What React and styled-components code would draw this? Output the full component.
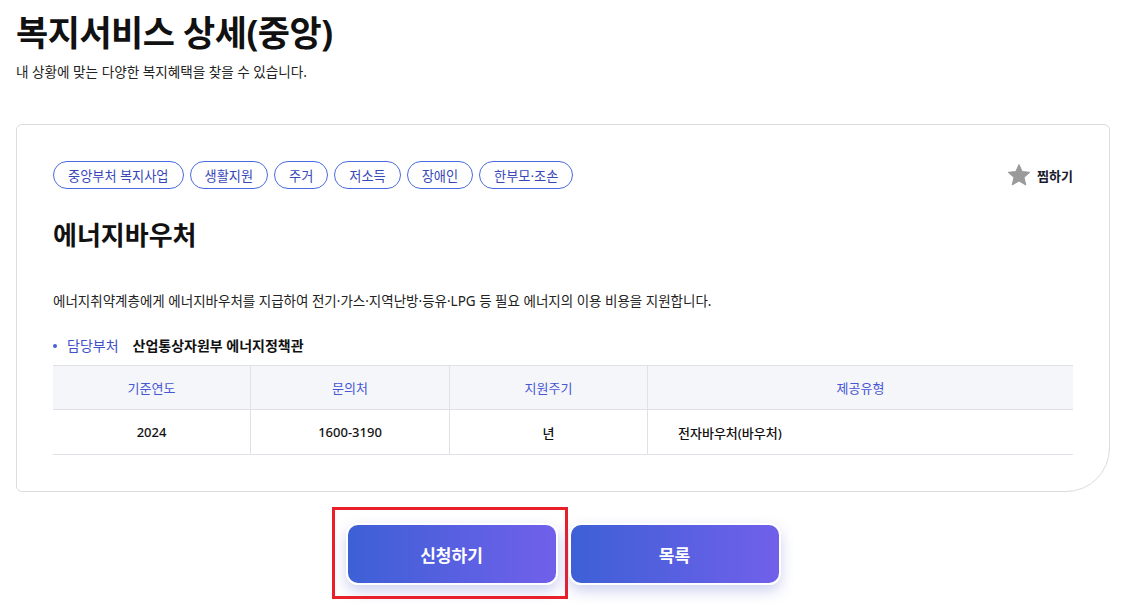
import styled, { createGlobalStyle } from "styled-components";

const GlobalStyle = createGlobalStyle`
  body {
    margin: 0;
    background: #ffffff;
    font-family: "Noto Sans", "Noto Sans CJK KR", sans-serif;
    color: #111111;
  }
`;

const Page = styled.div`
  width: 1094px;
  padding: 0 14px 24px 16px;
`;

const PageTitle = styled.h1`
  margin: 8px 0 0 0;
  font-size: 35px;
  font-weight: 700;
  line-height: 50px;
  letter-spacing: -0.5px;
`;

const PageDesc = styled.p`
  margin: 4px 0 0 0;
  font-size: 13.6px;
  line-height: 20px;
  color: #222;
`;

const Card = styled.div`
  margin-top: 42px;
  border: 1px solid #dcdcdc;
  border-radius: 6px 6px 44px 6px;
  padding: 36px;
`;

const TopRow = styled.div`
  display: flex;
  justify-content: space-between;
  align-items: center;
`;

const Tags = styled.div`
  display: flex;
  gap: 6px;
`;

const Tag = styled.span`
  display: inline-flex;
  align-items: center;
  height: 26px;
  padding: 0 14px;
  border: 1px solid #4a6bdf;
  border-radius: 14px;
  font-size: 13.2px;
  color: #3848b8;
`;

const LikeButton = styled.button`
  display: flex;
  align-items: center;
  gap: 6px;
  border: none;
  background: none;
  padding: 0;
  font-family: inherit;
  font-size: 13px;
  font-weight: 700;
  color: #1a1a2e;
  cursor: pointer;
`;

const ServiceTitle = styled.h2`
  margin: 26px 0 0 0;
  font-size: 26px;
  font-weight: 700;
  line-height: 40px;
`;

const ServiceDesc = styled.p`
  margin: 34px 0 0 0;
  font-size: 13.5px;
  line-height: 24px;
  color: #222;
`;

const InfoRow = styled.div`
  display: flex;
  align-items: center;
  margin-top: 21px;
  font-size: 14px;
  line-height: 24px;
`;

const Bullet = styled.span`
  width: 4px;
  height: 4px;
  border-radius: 50%;
  background: #4a5fd8;
  margin-right: 10px;
`;

const InfoLabel = styled.span`
  color: #4050cc;
  margin-right: 14px;
`;

const InfoValue = styled.span`
  font-weight: 700;
  color: #111;
`;

const Table = styled.table`
  width: 100%;
  margin-top: 7px;
  border-collapse: collapse;
  table-layout: fixed;
  font-size: 13px;
`;

const Th = styled.th`
  height: 43px;
  padding: 0;
  width: ${(p) => p.$w || "auto"};
  background: #f5f6fa;
  border-top: 1px solid #dfe1e6;
  border-bottom: 1px solid #dfe1e6;
  border-left: 1px solid #dfe1e6;
  font-weight: 400;
  color: #4757d4;
  text-align: center;
  &:first-child {
    border-left: none;
  }
`;

const Td = styled.td`
  height: 44px;
  padding: 0 0 0 ${(p) => (p.$left ? "30px" : "0")};
  border-bottom: 1px solid #dfe1e6;
  border-left: 1px solid #dfe1e6;
  font-weight: 500;
  color: #111;
  text-align: ${(p) => (p.$left ? "left" : "center")};
  &:first-child {
    border-left: none;
  }
`;

const Actions = styled.div`
  display: flex;
  justify-content: center;
  gap: 11px;
  margin-top: 31px;
`;

const ActionButton = styled.button`
  position: relative;
  width: 212px;
  height: 62px;
  border: 2px solid #ffffff;
  border-radius: 12px;
  background: linear-gradient(90deg, #3d60d6 0%, #7160ea 100%);
  box-shadow: 0 6px 14px rgba(80, 90, 200, 0.28);
  font-family: inherit;
  font-size: 17px;
  font-weight: 700;
  color: #fff;
  cursor: pointer;

  ${(p) =>
    p.$highlight &&
    `
    &::after {
      content: "";
      position: absolute;
      left: -16px;
      right: -12px;
      top: -18px;
      bottom: -16px;
      border: 3px solid #e8202a;
      pointer-events: none;
    }
  `}
`;

function Star() {
  return (
    <svg width="24" height="24" viewBox="0 0 24 24">
      <path
        d="M12 1.5l3.2 7.1 7.6.7-5.8 5.1 1.8 7.6L12 18l-6.8 4 1.8-7.6L1.2 9.3l7.6-.7z"
        fill="#9a9a9a"
        stroke="#9a9a9a"
        strokeWidth="1"
        strokeLinejoin="round"
      />
    </svg>
  );
}

const tags = ["중앙부처 복지사업", "생활지원", "주거", "저소득", "장애인", "한부모·조손"];

export default function App() {
  return (
    <>
      <GlobalStyle />
      <Page>
        <PageTitle>복지서비스 상세(중앙)</PageTitle>
        <PageDesc>내 상황에 맞는 다양한 복지혜택을 찾을 수 있습니다.</PageDesc>
        <Card>
          <TopRow>
            <Tags>
              {tags.map((t) => (
                <Tag key={t}>{t}</Tag>
              ))}
            </Tags>
            <LikeButton>
              <Star />
              찜하기
            </LikeButton>
          </TopRow>
          <ServiceTitle>에너지바우처</ServiceTitle>
          <ServiceDesc>
            에너지취약계층에게 에너지바우처를 지급하여 전기·가스·지역난방·등유·LPG 등 필요 에너지의 이용 비용을 지원합니다.
          </ServiceDesc>
          <InfoRow>
            <Bullet />
            <InfoLabel>담당부처</InfoLabel>
            <InfoValue>산업통상자원부 에너지정책관</InfoValue>
          </InfoRow>
          <Table>
            <thead>
              <tr>
                <Th $w="197px">기준연도</Th>
                <Th $w="198px">문의처</Th>
                <Th $w="197px">지원주기</Th>
                <Th>제공유형</Th>
              </tr>
            </thead>
            <tbody>
              <tr>
                <Td>2024</Td>
                <Td>1600-3190</Td>
                <Td>년</Td>
                <Td $left>전자바우처(바우처)</Td>
              </tr>
            </tbody>
          </Table>
        </Card>
        <Actions>
          <ActionButton $highlight>신청하기</ActionButton>
          <ActionButton>목록</ActionButton>
        </Actions>
      </Page>
    </>
  );
}
